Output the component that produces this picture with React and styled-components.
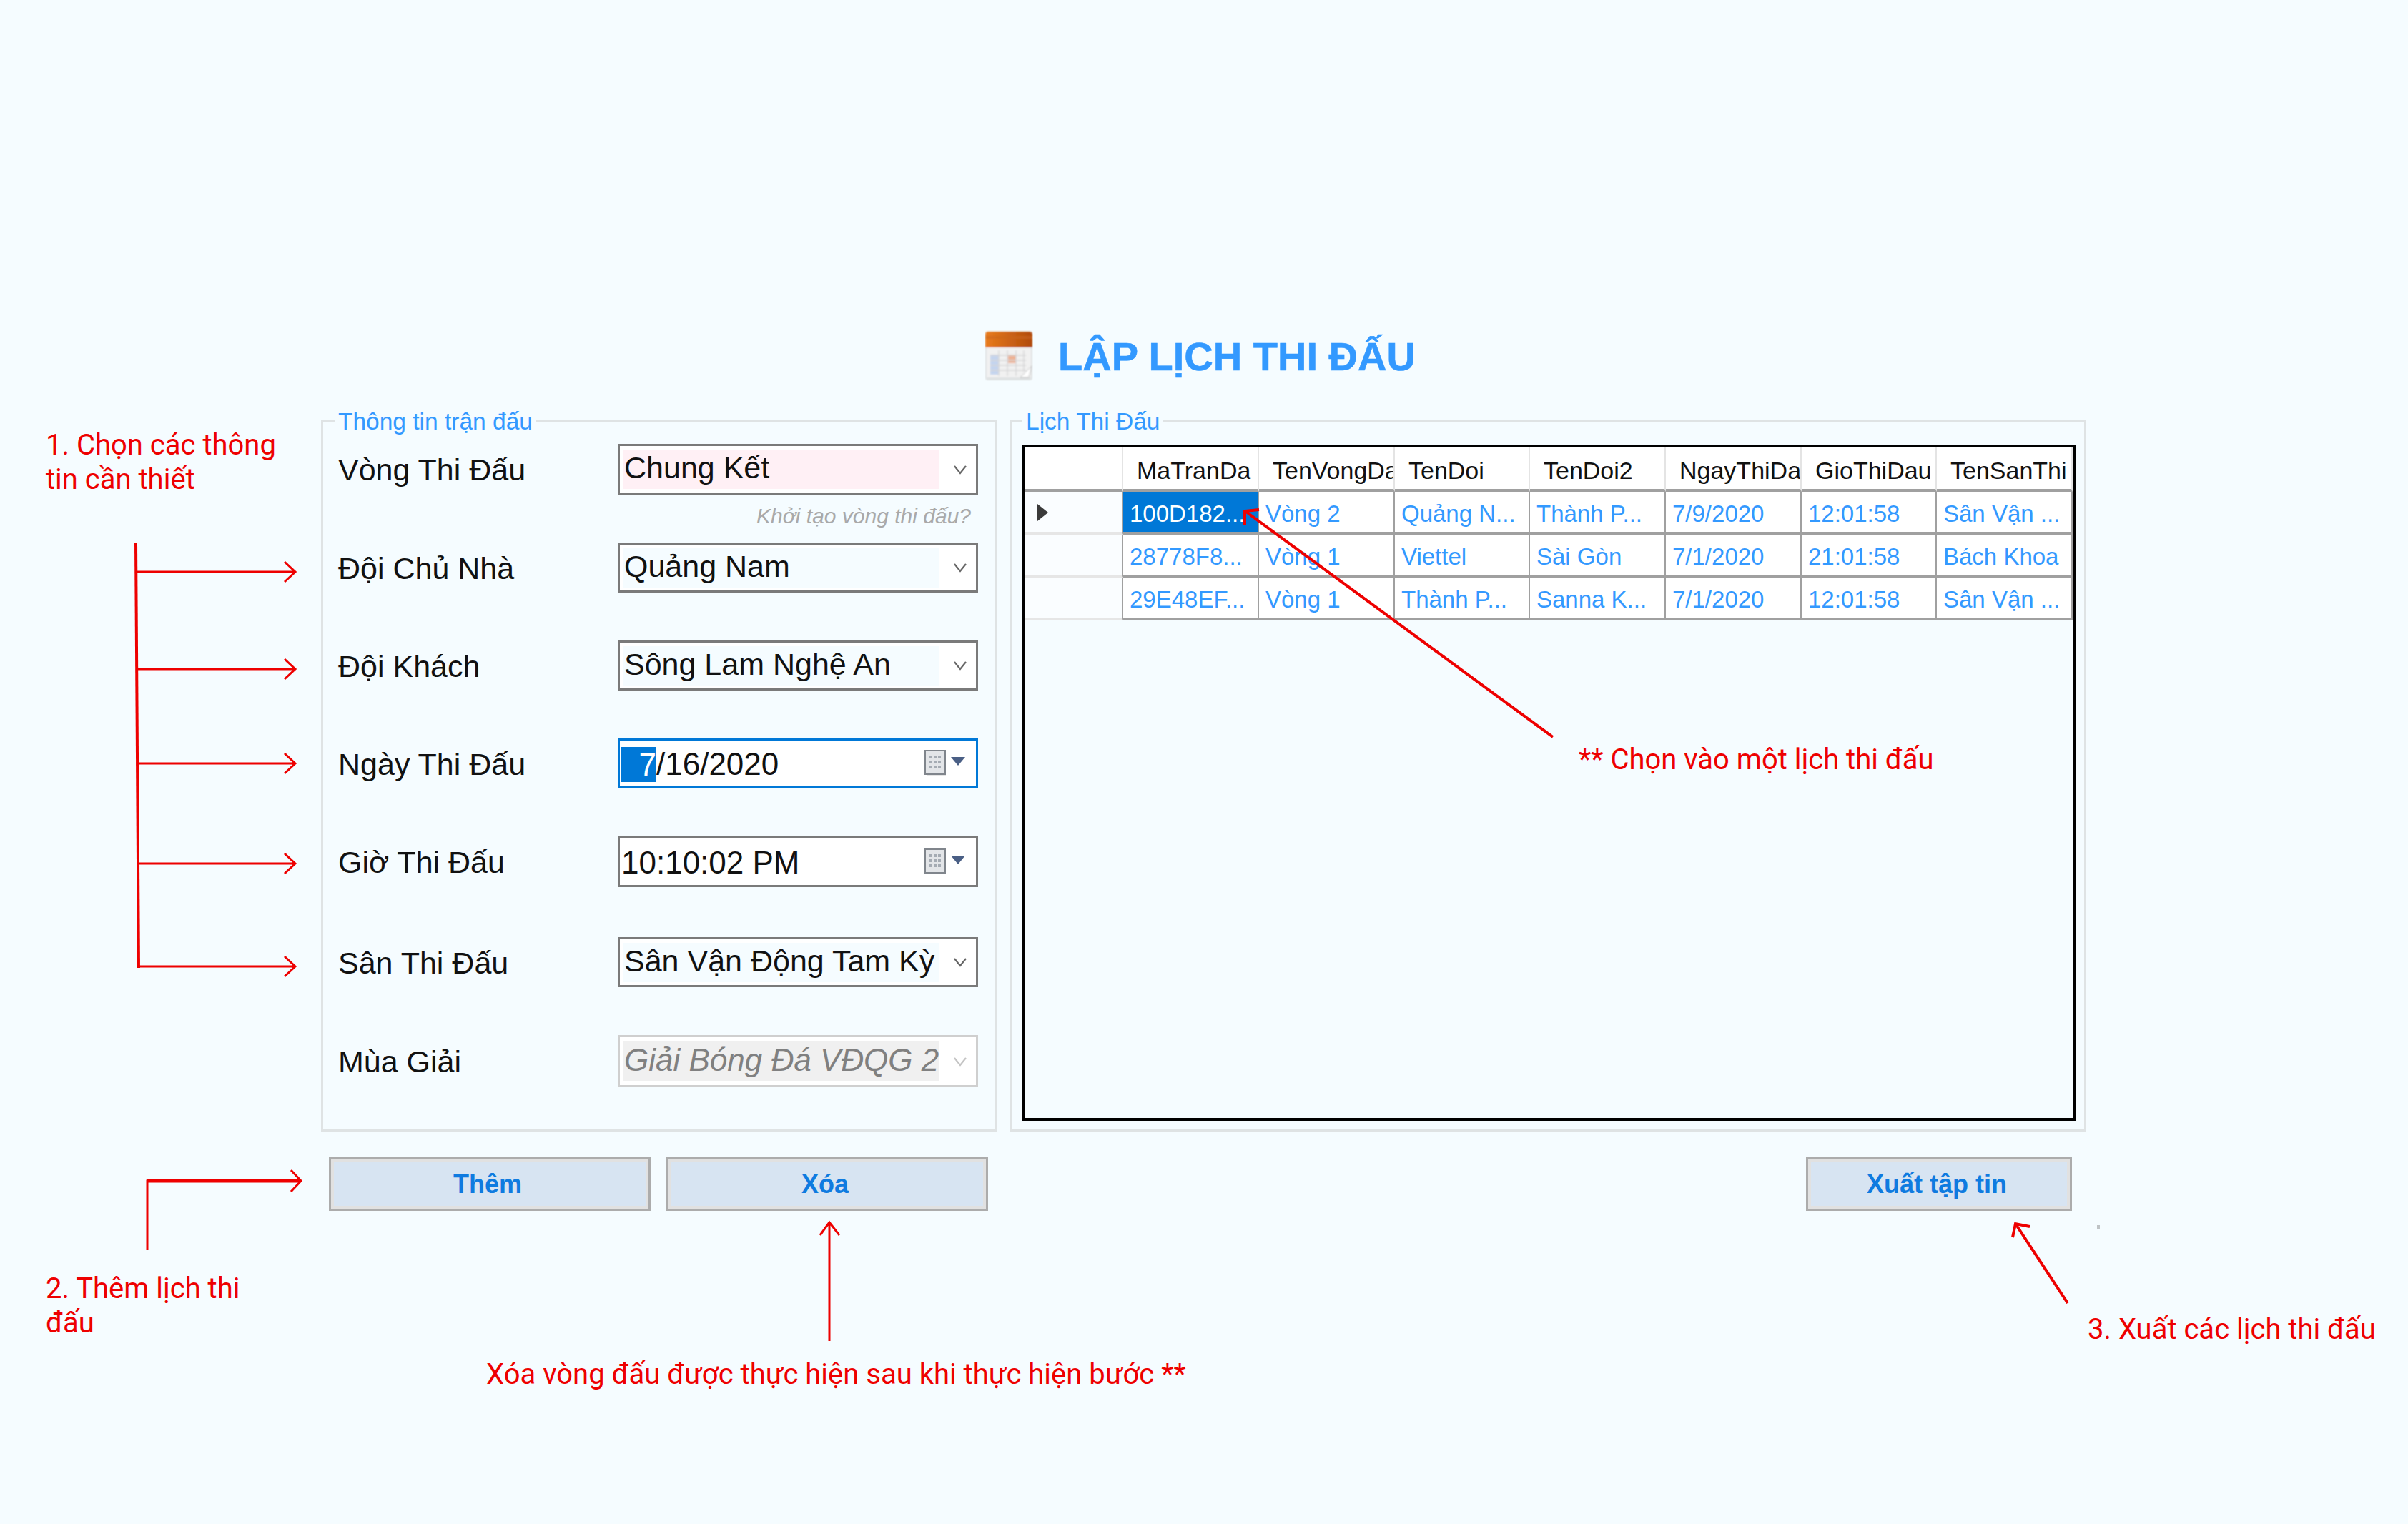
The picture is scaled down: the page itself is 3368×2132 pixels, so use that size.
import React from "react";
import styled, { createGlobalStyle } from "styled-components";

const Global = createGlobalStyle`
  html, body { margin: 0; padding: 0; background: #f5fcff; }
`;

const Page = styled.div`
  position: relative;
  width: 3368px;
  height: 2132px;
  overflow: hidden;
  background: #f5fcff;
  font-family: "Liberation Sans", Arial, sans-serif;
  padding-top: 462px;
  box-sizing: border-box;
`;

const TitleRow = styled.header`
  display: flex;
  gap: 35px;
  height: 108px;
  padding-left: 1377px;
  align-items: flex-start;
`;

const Title = styled.h1`
  margin: 0;
  padding-top: 2px;
  font-size: 56px;
  font-weight: 700;
  line-height: 70px;
  color: #3399ff;
  -webkit-text-stroke: 0.6px #3399ff;
`;

const Panels = styled.div`
  display: flex;
  gap: 18px;
  padding-left: 449px;
`;

const Group = styled.fieldset`
  box-sizing: border-box;
  margin: 0;
  min-width: 0;
  width: ${(p) => p.$w}px;
  height: 1013px;
  padding: ${(p) => p.$pad};
  border: 3px solid #dfe3e4;
`;

const Legend = styled.legend`
  margin-left: ${(p) => p.$ml}px;
  padding: 4px 5px 0;
  font-size: 33.5px;
  line-height: 32px;
  color: #3399ff;
`;

const FormRow = styled.div`
  display: grid;
  grid-template-columns: 391px 504px;
  align-items: center;
  height: ${(p) => p.$h || 70}px;
  margin-top: ${(p) => p.$mt ?? 67}px;
`;

const Label = styled.label`
  padding-top: 1px;
  font-size: 43px;
  line-height: 50px;
  color: #111;
`;

const Hint = styled.div`
  width: 885px;
  height: 67px;
  display: flex;
  align-items: center;
  justify-content: flex-end;
  padding-bottom: 7px;
  box-sizing: border-box;
  font-size: 30px;
  font-style: italic;
  color: #a9a9a9;
`;

const Field = styled.div`
  box-sizing: border-box;
  width: 504px;
  height: 100%;
  display: flex;
  align-items: center;
  background: #fff;
  border: 3px solid ${(p) => (p.$focus ? "#0078d7" : p.$off ? "#cfcfcf" : "#7a7a7a")};
`;

const ComboValue = styled.div`
  box-sizing: border-box;
  width: 442px;
  height: 55px;
  margin-left: 4px;
  padding: 0 0 4px 2px;
  display: flex;
  align-items: center;
  overflow: hidden;
  white-space: nowrap;
  font-size: ${(p) => (p.$off ? 44 : 43)}px;
  font-style: ${(p) => (p.$off ? "italic" : "normal")};
  background: ${(p) => (p.$off ? "#f0f0f0" : p.$tint || "#f5fcff")};
  color: ${(p) => (p.$off ? "#808080" : "#111")};
`;

const Chevron = styled.svg`
  margin-left: 20px;
  width: 20px;
  height: 14px;
`;

const DateValue = styled.div`
  flex: 1;
  padding: 2px 0 0 2px;
  display: flex;
  align-items: center;
  font-size: 44px;
  color: #111;
`;

const Selected = styled.span`
  display: inline-block;
  box-sizing: border-box;
  width: 49px;
  height: 49px;
  line-height: 49px;
  text-align: right;
  background: #0078d7;
  color: #fff;
`;

const CalIcon = styled.svg`
  width: 58px;
  height: 38px;
  margin-right: 14px;
`;

const GridBox = styled.div`
  box-sizing: border-box;
  width: 1473px;
  height: 946px;
  border: 4px solid #000;
`;

const Table = styled.table`
  table-layout: fixed;
  border-collapse: separate;
  border-spacing: 0;
  width: 1465px;
  font-size: 33px;
`;

const Th = styled.th`
  box-sizing: border-box;
  height: 62px;
  padding: 6px 0 0 19px;
  background: #fff;
  border-bottom: 4px solid #a0a0a0;
  border-right: 2px solid #e4e4e4;
  font-size: 34px;
  font-weight: 400;
  text-align: left;
  color: #111;
  overflow: hidden;
  white-space: nowrap;
`;

const RowHead = styled.td`
  box-sizing: border-box;
  height: 60px;
  padding: 6px 0 0 16px;
  background: #fafdff;
  border-bottom: 4px solid #e6e6e6;
  border-right: 2px solid #a0a0a0;
`;

const Td = styled.td`
  box-sizing: border-box;
  height: 60px;
  padding: 6px 0 0 9px;
  background: ${(p) => (p.$sel ? "#0078d7" : "#fff")};
  color: ${(p) => (p.$sel ? "#fff" : "#3399ff")};
  border-bottom: 4px solid #a0a0a0;
  border-right: 2px solid #a0a0a0;
  overflow: hidden;
  white-space: nowrap;
`;

const Actions = styled.div`
  display: flex;
  gap: 22px;
  margin-top: 35px;
  padding: 0 470px 0 460px;
`;

const Button = styled.button`
  box-sizing: border-box;
  width: ${(p) => p.$w}px;
  height: 76px;
  margin-left: ${(p) => (p.$push ? "auto" : "0")};
  padding: 2px 6px 0 0;
  background: #d7e4f2;
  border: 3px solid #acacac;
  box-shadow: inset 0 0 0 4px #e1e1e1;
  font-family: inherit;
  font-size: 36px;
  font-weight: 700;
  color: #0f7be0;
`;

const Note = styled.div`
  position: absolute;
  left: ${(p) => p.$x}px;
  top: ${(p) => p.$y}px;
  font-family: Roboto, "Liberation Sans", sans-serif;
  font-size: 40px;
  line-height: 48px;
  color: #ee0000;
  white-space: pre;
`;

const Overlay = styled.svg`
  position: absolute;
  left: 0;
  top: 0;
  width: 3368px;
  height: 2132px;
  pointer-events: none;
`;

const Speck = styled.div`
  position: absolute;
  left: 2933px;
  top: 1714px;
  width: 4px;
  height: 6px;
  background: #bfc3c5;
`;

const Calendar = () => (
  <svg width="68" height="71" viewBox="0 0 68 71">
    <defs>
      <linearGradient id="band" x1="0" x2="1" y1="0" y2="0">
        <stop offset="0" stopColor="#e97c1c" />
        <stop offset="1" stopColor="#b04a0c" />
      </linearGradient>
      <filter id="soft"><feGaussianBlur stdDeviation="0.9" /></filter>
    </defs>
    <g filter="url(#soft)">
      <rect x="1" y="2" width="66" height="68" rx="4" fill="#dfe2e3" />
      <rect x="3" y="24" width="62" height="42" fill="#f1f1f1" />
      <path d="M1 24V6q0-4 4-4h58q4 0 4 4v18z" fill="url(#band)" />
      <rect x="1" y="8" width="66" height="4" fill="#c9661a" opacity="0.6" />
      <rect x="8" y="34" width="12" height="28" fill="#c4d4ee" />
      <rect x="33" y="34" width="11" height="12" fill="#eeb193" />
      <g stroke="#d6d6d8" strokeWidth="1.5">
        <path d="M8 35h50M8 42h50M8 49h50M8 56h50M20 28v36M32 28v36M44 28v36M55 28v30" />
      </g>
      <path d="M66 50 L50 66 L62 66z" fill="#fff" stroke="#bbb" />
    </g>
  </svg>
);

const ChevronIcon = ({ off }) => (
  <Chevron viewBox="0 0 20 14">
    <path d="M2 2 L10 12 L18 2" fill="none" stroke={off ? "#c4c4c4" : "#666"} strokeWidth="2.2" />
  </Chevron>
);

const Combo = ({ value, tint, off }) => (
  <Field $off={off}>
    <ComboValue $tint={tint} $off={off}>{value}</ComboValue>
    <ChevronIcon off={off} />
  </Field>
);

const PickerIcon = () => (
  <CalIcon viewBox="0 0 58 38">
    <rect x="3" y="5" width="27" height="31" fill="#000" opacity="0.1" />
    <rect x="1" y="1" width="28" height="33" fill="#e3e5e8" stroke="#80858c" strokeWidth="2" />
    <path d="M7 8h4v4H7zM13 8h4v4h-4zM19 8h4v4h-4zM7 15h4v4H7zM13 15h4v4h-4zM19 15h4v4h-4zM7 22h4v4H7zM13 22h4v4h-4zM19 22h4v4h-4z" fill="#a5abb3" />
    <path d="M37 10h20l-10 12z" fill="#4a5f85" />
  </CalIcon>
);

const Arrow = ({ d, w = 3 }) => (
  <path d={d} fill="none" stroke="#ee0000" strokeWidth={w} />
);

const columns = ["MaTranDa", "TenVongDa", "TenDoi", "TenDoi2", "NgayThiDa", "GioThiDau", "TenSanThi"];
const widths = [137, 190, 190, 189, 190, 190, 189, 190];
const rows = [
  ["100D182...", "Vòng 2", "Quảng N...", "Thành P...", "7/9/2020", "12:01:58", "Sân Vận ..."],
  ["28778F8...", "Vòng 1", "Viettel", "Sài Gòn", "7/1/2020", "21:01:58", "Bách Khoa"],
  ["29E48EF...", "Vòng 1", "Thành P...", "Sanna K...", "7/1/2020", "12:01:58", "Sân Vận ..."],
];

export default function App() {
  return (
    <Page>
      <Global />
      <TitleRow>
        <Calendar />
        <Title>LẬP LỊCH THI ĐẤU</Title>
      </TitleRow>

      <Panels>
        <Group $w={945} $pad="15px 0 0 21px">
          <Legend $ml={-5}>Thông tin trận đấu</Legend>
          <FormRow $mt={0} $h={71}>
            <Label>Vòng Thi Đấu</Label>
            <Combo value="Chung Kết" tint="#fff0f5" />
          </FormRow>
          <Hint>Khởi tạo vòng thi đấu?</Hint>
          <FormRow $mt={0}>
            <Label>Đội Chủ Nhà</Label>
            <Combo value="Quảng Nam" />
          </FormRow>
          <FormRow>
            <Label>Đội Khách</Label>
            <Combo value="Sông Lam Nghệ An" />
          </FormRow>
          <FormRow>
            <Label>Ngày Thi Đấu</Label>
            <Field $focus>
              <DateValue><Selected>7</Selected>/16/2020</DateValue>
              <PickerIcon />
            </Field>
          </FormRow>
          <FormRow $h={71}>
            <Label>Giờ Thi Đấu</Label>
            <Field>
              <DateValue>10:10:02 PM</DateValue>
              <PickerIcon />
            </Field>
          </FormRow>
          <FormRow $mt={70}>
            <Label>Sân Thi Đấu</Label>
            <Combo value="Sân Vận Động Tam Kỳ" />
          </FormRow>
          <FormRow $h={73}>
            <Label>Mùa Giải</Label>
            <Combo value="Giải Bóng Đá VĐQG 2" off />
          </FormRow>
        </Group>

        <Group $w={1506} $pad="16px 0 0 15px">
          <Legend $ml={0}>Lịch Thi Đấu</Legend>
          <GridBox>
            <Table>
              <colgroup>
                {widths.map((w, i) => <col key={i} width={w} />)}
              </colgroup>
              <thead>
                <tr>
                  <Th />
                  {columns.map((c) => <Th key={c}>{c}</Th>)}
                </tr>
              </thead>
              <tbody>
                {rows.map((r, i) => (
                  <tr key={i}>
                    <RowHead>
                      {i === 0 && (
                        <svg width="17" height="26" viewBox="0 0 17 26">
                          <path d="M1 1 L16 13 L1 25z" fill="#3a3a3a" />
                        </svg>
                      )}
                    </RowHead>
                    {r.map((v, j) => <Td key={j} $sel={i === 0 && j === 0}>{v}</Td>)}
                  </tr>
                ))}
              </tbody>
            </Table>
          </GridBox>
        </Group>
      </Panels>

      <Actions>
        <Button $w={450}>Thêm</Button>
        <Button $w={450}>Xóa</Button>
        <Button $w={372} $push>Xuất tập tin</Button>
      </Actions>

      <Note $x={64} $y={599}>{"1. Chọn các thông\ntin cần thiết"}</Note>
      <Note $x={64} $y={1779}>{"2. Thêm lịch thi\nđấu"}</Note>
      <Note $x={680} $y={1899}>Xóa vòng đấu được thực hiện sau khi thực hiện bước **</Note>
      <Note $x={2208} $y={1039}>** Chọn vào một lịch thi đấu</Note>
      <Note $x={2920} $y={1836}>3. Xuất các lịch thi đấu</Note>
      <Speck />

      <Overlay viewBox="0 0 3368 2132">
        <Arrow d="M190 760 L194 1354" w={4} />
        {[800, 936, 1068, 1208, 1352].map((y) => (
          <Arrow key={y} d={`M192 ${y}H412M398 ${y - 14}L413 ${y}L398 ${y + 14}`} />
        ))}
        <Arrow d="M206 1748V1652H420" w={3} />
        <Arrow d="M206 1652H418" w={5} />
        <Arrow d="M407 1637L421 1652L407 1667" />
        <Arrow d="M1160 1876V1712M1147 1728L1160 1710L1174 1728" />
        <Arrow d="M2892 1823L2819 1712M2815 1731L2819 1712L2839 1716" w={4} />
        <Arrow d="M2172 1031L1743 716M1761 713L1741 715L1741 735" w={4} />
      </Overlay>
    </Page>
  );
}
